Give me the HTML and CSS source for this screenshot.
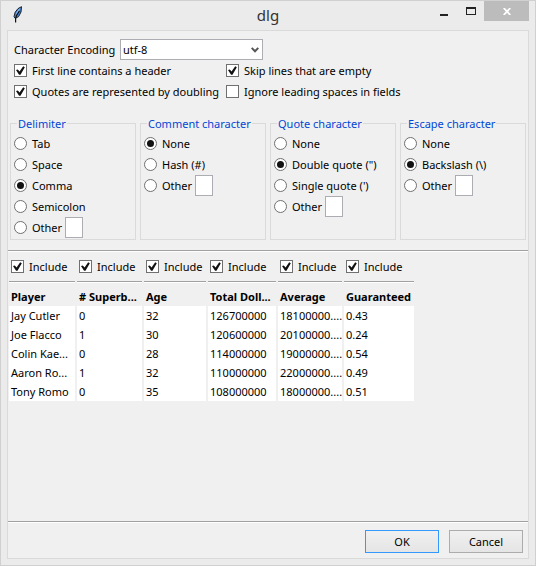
FILE: index.html
```html
<!DOCTYPE html>
<html lang="en">
<head>
<meta charset="utf-8">
<title>dlg</title>
<link rel="stylesheet" href="styles.css">
</head>
<body>
<div class="window">
  <header class="titlebar">
    <svg class="feather" width="10" height="18" viewBox="0 0 10 18" aria-hidden="true">
      <path d="M8.5 .7 5 2.6 2.2 6.2 1 10.6 2.2 12.4 5.6 10.6 8 6 Z" fill="#3f83d6" stroke="#1c232e"/>
      <path d="M7.4 2 5.6 3.4 3.6 6.4 2.6 9.4 4.6 6.6Z" fill="#b4cdec"/>
      <path d="M6.4 5 3.5 9.5 2.6 12.5V16.5" fill="none" stroke="#111" stroke-width="1.2"/>
    </svg>
    <h1 class="title">dlg</h1>
    <div class="controls">
      <button class="control minimize" type="button" aria-label="Minimize"><svg width="8" height="10" viewBox="0 0 8 10"><path d="M0 8h8v2H0z" fill="#222"/></svg></button>
      <button class="control maximize" type="button" aria-label="Maximize"><svg width="10" height="8" viewBox="0 0 10 8"><path d="M0 0h10v8H0zM1 2v5h8V2z" fill="#222" fill-rule="evenodd"/></svg></button>
      <button class="control close" type="button" aria-label="Close"><svg width="8" height="7" viewBox="0 0 8 7"><path d="M.7 0 7.3 7M7.3 0 .7 7" stroke="#fff" stroke-width="1.8"/></svg></button>
    </div>
  </header>
  <form class="client">
    <section class="options">
      <div class="encoding">
        <label for="enc">Character Encoding</label>
        <div class="combo">
          <select id="enc"><option>utf-8</option></select>
          <svg class="arrow" width="8" height="6" viewBox="0 0 8 6" aria-hidden="true"><path d="M.7 .9 4 4.3 7.3 .9" fill="none" stroke="#555" stroke-width="2"/></svg>
        </div>
      </div>
      <div class="flags">
        <label class="choice"><input type="checkbox" checked>First line contains a header</label>
        <label class="choice"><input type="checkbox" checked>Skip lines that are empty</label>
        <label class="choice"><input type="checkbox" checked>Quotes are represented by doubling</label>
        <label class="choice"><input type="checkbox">Ignore leading spaces in fields</label>
      </div>
    </section>
    <section class="groups">
      <fieldset class="group">
        <legend>Delimiter</legend>
        <label class="choice"><input type="radio" name="delim">Tab</label>
        <label class="choice"><input type="radio" name="delim">Space</label>
        <label class="choice"><input type="radio" name="delim" checked>Comma</label>
        <label class="choice"><input type="radio" name="delim">Semicolon</label>
        <div class="other"><label class="choice"><input type="radio" name="delim">Other</label><input class="char" type="text" maxlength="1" aria-label="Other delimiter"></div>
      </fieldset>
      <fieldset class="group">
        <legend>Comment character</legend>
        <label class="choice"><input type="radio" name="comment" checked>None</label>
        <label class="choice"><input type="radio" name="comment">Hash (#)</label>
        <div class="other"><label class="choice"><input type="radio" name="comment">Other</label><input class="char" type="text" maxlength="1" aria-label="Other comment character"></div>
      </fieldset>
      <fieldset class="group">
        <legend>Quote character</legend>
        <label class="choice"><input type="radio" name="quote">None</label>
        <label class="choice"><input type="radio" name="quote" checked>Double quote (")</label>
        <label class="choice"><input type="radio" name="quote">Single quote (')</label>
        <div class="other"><label class="choice"><input type="radio" name="quote">Other</label><input class="char" type="text" maxlength="1" aria-label="Other quote character"></div>
      </fieldset>
      <fieldset class="group">
        <legend>Escape character</legend>
        <label class="choice"><input type="radio" name="escape">None</label>
        <label class="choice"><input type="radio" name="escape" checked>Backslash (\)</label>
        <div class="other"><label class="choice"><input type="radio" name="escape">Other</label><input class="char" type="text" maxlength="1" aria-label="Other escape character"></div>
      </fieldset>
    </section>
    <section class="preview">
      <table>
        <colgroup><col class="w-player"><col class="w-bowls"><col class="w-age"><col class="w-total"><col class="w-average"><col class="w-guaranteed"></colgroup>
        <thead>
          <tr class="include">
            <td><label class="choice"><input type="checkbox" checked>Include</label></td>
            <td><label class="choice"><input type="checkbox" checked>Include</label></td>
            <td><label class="choice"><input type="checkbox" checked>Include</label></td>
            <td><label class="choice"><input type="checkbox" checked>Include</label></td>
            <td><label class="choice"><input type="checkbox" checked>Include</label></td>
            <td><label class="choice"><input type="checkbox" checked>Include</label></td>
          </tr>
          <tr class="names"><th>Player</th><th># Superb...</th><th>Age</th><th>Total Doll...</th><th>Average</th><th>Guaranteed</th></tr>
        </thead>
        <tbody>
          <tr><td>Jay Cutler</td><td>0</td><td>32</td><td>126700000</td><td>18100000....</td><td>0.43</td></tr>
          <tr><td>Joe Flacco</td><td>1</td><td>30</td><td>120600000</td><td>20100000....</td><td>0.24</td></tr>
          <tr><td>Colin Kae...</td><td>0</td><td>28</td><td>114000000</td><td>19000000....</td><td>0.54</td></tr>
          <tr><td>Aaron Ro...</td><td>1</td><td>32</td><td>110000000</td><td>22000000....</td><td>0.49</td></tr>
          <tr><td>Tony Romo</td><td>0</td><td>35</td><td>108000000</td><td>18000000....</td><td>0.51</td></tr>
        </tbody>
      </table>
    </section>
    <footer class="actions">
      <button class="button default" type="button">OK</button>
      <button class="button" type="button">Cancel</button>
    </footer>
  </form>
</div>
</body>
</html>
```
FILE: styles.css
```css
* { box-sizing: border-box; }

body {
  margin: 0;
  font: 11px/19px "Noto Sans", "Open Sans", sans-serif;
  color: #000;
}

button, input, select { font: inherit; color: inherit; }

.window {
  display: flex;
  flex-direction: column;
  min-height: 100vh;
  padding: 0 6px 6px;
  border: 1px solid #d0d0d0;
  background: #ebebeb;
}

.titlebar {
  display: grid;
  grid-template-columns: 1fr auto 1fr;
  align-items: start;
  height: 29px;
}

.feather { margin: 5px 0 0 6px; }

.title {
  margin: 0;
  font-size: 15px;
  font-weight: 400;
  line-height: 29px;
  color: #333;
}

.controls { display: flex; justify-content: flex-end; }

.control {
  display: flex;
  align-items: center;
  justify-content: center;
  width: 27px;
  height: 20px;
  padding: 0;
  border: 0;
  background: none;
}

.close { width: 45px; background: #bcbcbc; }

.client {
  display: flex;
  flex: 1;
  flex-direction: column;
  border: 1px solid #dadada;
  background: #f0f0f0;
}

.options { padding: 8px 6px 0; }

.encoding { display: flex; align-items: center; gap: 2px; }

.encoding label { min-width: 104px; }

.combo { position: relative; width: 143px; }

.combo select {
  display: block;
  width: 100%;
  height: 21px;
  padding: 0 2px;
  border: 1px solid #abadb3;
  background: #fff;
  appearance: none;
}

.arrow { position: absolute; top: 8px; right: 4px; pointer-events: none; }

.flags { display: grid; grid-template-columns: 212px 1fr; }

.choice {
  display: flex;
  align-items: center;
  gap: 5px;
  height: 21px;
  white-space: nowrap;
}

.choice input {
  display: grid;
  flex: none;
  place-items: center;
  width: 13px;
  height: 13px;
  margin: 0;
  border: 1px solid #707070;
  background: #fff;
  appearance: none;
}

.choice input:checked::before { content: ""; background: #111; }

.choice [type="checkbox"]:checked::before {
  width: 9px;
  height: 9px;
  clip-path: polygon(0 45%, 20% 38%, 40% 62%, 80% 2%, 98% 14%, 50% 96%, 34% 96%);
}

.choice [type="radio"] { border-radius: 50%; }

.choice [type="radio"]:checked::before { width: 7px; height: 7px; border-radius: 50%; }

.groups {
  display: grid;
  grid-template-columns: repeat(4, 1fr);
  gap: 4px;
  padding: 12px 2px 10px;
}

.group {
  min-width: 0;
  min-height: 125px;
  margin: 0;
  padding: 0 3px 1px;
  border: 1px solid #dadada;
}

.group legend { margin-left: 3px; padding: 0 1px; color: #0046d5; }

.other { display: flex; gap: 3px; }

.char {
  width: 18px;
  height: 21px;
  padding: 1px;
  border: 1px solid #abadb3;
  background: #fff;
}

.preview {
  flex: 1;
  border-top: 1px solid #a0a0a0;
  box-shadow: inset 0 1px #fff;
}

table {
  table-layout: fixed;
  width: 409px;
  margin-left: -1px;
  border-spacing: 2px 0;
}

.w-player { width: 66px; }
.w-bowls { width: 65px; }
.w-age { width: 62px; }
.w-total { width: 68px; }
.w-average { width: 64px; }
.w-guaranteed { width: 70px; }

td, th {
  height: 19px;
  padding: 0 0 0 2px;
  text-align: left;
  white-space: nowrap;
}

tbody td { background: #fff; }

.include td {
  height: 32px;
  border-bottom: 1px solid #fff;
  box-shadow: inset 0 -1px #a0a0a0;
}

.names th { height: 23px; padding-top: 4px; }

.actions {
  display: flex;
  justify-content: flex-end;
  gap: 10px;
  padding: 8px 5px 5px;
  border-top: 1px solid #a0a0a0;
  box-shadow: inset 0 1px #fff;
}

.button {
  width: 74px;
  height: 23px;
  padding: 0;
  border: 1px solid #acacac;
  background: linear-gradient(#f0f0f0, #e5e5e5);
}

.default { border-color: #3399ff; }
```
